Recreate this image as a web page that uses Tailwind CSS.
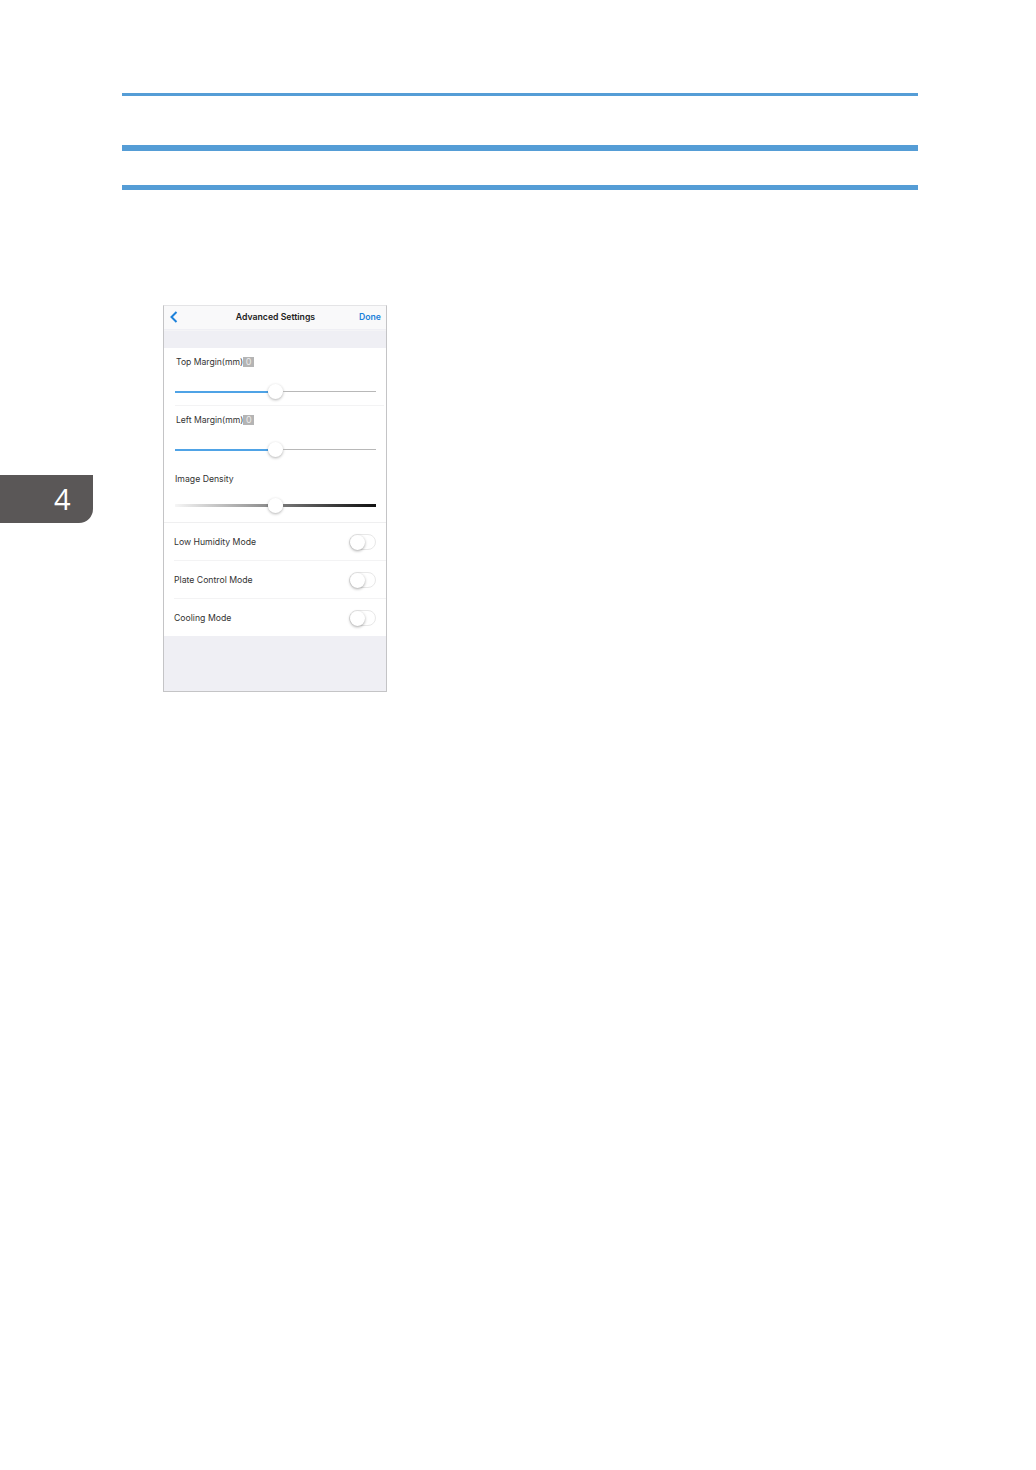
<!DOCTYPE html>
<html lang="en">
<head>
    <meta charset="UTF-8">
    <title>Advanced Settings</title>
    <script src="https://cdn.jsdelivr.net/npm/@tailwindcss/browser@4"></script>
</head>
<body class="bg-white font-['Liberation_Sans',sans-serif]">
    <div class="flex w-[1036px] h-[1470px]">
        <!-- Chapter tab -->
        <div class="w-[122px] shrink-0 pt-[475px]">
            <div class="w-[93px] h-[48px] pl-[54px] pt-[7px] bg-[#5a5757] rounded-br-[14px] text-white text-[29px] leading-[34px] font-['Open_Sans',sans-serif]">4</div>
        </div>

        <div class="w-[796px] pt-[93px]">
            <div class="h-[3px] bg-[#559dd6]"></div>
            <div class="h-[6px] mt-[49px] bg-[#559dd6]"></div>
            <div class="h-[5px] mt-[34px] bg-[#559dd6]"></div>

            <!-- Phone screenshot -->
            <div class="ml-[41px] mt-[115px] w-[224px] h-[387px] border border-[#c4c4c6] border-t-[#e4e4e6] bg-[#efeff4] flex flex-col text-[#333] font-['Inter',sans-serif]">
                <div class="h-[23px] bg-[#f9f9fa] grid grid-cols-[1fr_auto_1fr] items-center pl-[6px] pr-[5px]">
                    <svg class="w-[8px] h-[12px] -mt-[2px]" viewBox="0 0 8 12" fill="none" stroke="#1d82db" stroke-width="2"><path d="M6.5 1 L1.5 6 L6.5 11"/></svg>
                    <span class="text-[8.7px] font-semibold text-[#222]">Advanced Settings</span>
                    <span class="text-[8.7px] font-semibold text-[#1d82db] text-right">Done</span>
                </div>
                <div class="h-[18px] mt-px bg-[#efeff4] border-t border-[#f4f4f6]"></div>

                <div class="bg-white h-[288px] flex flex-col">
                    <!-- Top margin -->
                    <div class="h-[57px] pl-[12px] pt-[8px] flex flex-col">
                        <div class="flex items-center h-[12px] text-[8.6px] leading-[12px]">
                            <span>Top Margin(mm)</span>
                            <span class="w-[11px] h-[10px] bg-[#b4b4b4] text-[#ececec] text-[9px] leading-[10px] text-center">0</span>
                        </div>
                        <div class="flex items-center w-[201px] -ml-[1px] mt-[16px]">
                            <div class="w-[93px] h-[2px] bg-[#4fa3e6]"></div>
                            <div class="w-[15px] h-[15px] rounded-full bg-white shadow-[0_1px_3px_rgba(0,0,0,0.3)] shrink-0"></div>
                            <div class="flex-1 h-px bg-[#b8b8b8]"></div>
                        </div>
                    </div>
                    <div class="h-px ml-[11px] mr-[2px] bg-[#f3f3f4]"></div>
                    <!-- Left margin -->
                    <div class="h-[58px] pl-[12px] pt-[8px] flex flex-col">
                        <div class="flex items-center h-[12px] text-[8.6px] leading-[12px]">
                            <span>Left Margin(mm)</span>
                            <span class="w-[11px] h-[10px] bg-[#b4b4b4] text-[#ececec] text-[9px] leading-[10px] text-center">0</span>
                        </div>
                        <div class="flex items-center w-[201px] -ml-[1px] mt-[16px]">
                            <div class="w-[93px] h-[2px] bg-[#4fa3e6]"></div>
                            <div class="w-[15px] h-[15px] rounded-full bg-white shadow-[0_1px_3px_rgba(0,0,0,0.3)] shrink-0"></div>
                            <div class="flex-1 h-px bg-[#b8b8b8]"></div>
                        </div>
                    </div>
                    <!-- Image density -->
                    <div class="h-[59px] pl-[11px] pt-[9px] flex flex-col border-b border-[#efeff0]">
                        <div class="h-[12px] text-[8.7px] leading-[12px]">Image Density</div>
                        <div class="flex items-center w-[201px] mt-[13px]">
                            <div class="w-[93px] h-[3px] bg-gradient-to-r from-[#f6f6f6] to-[#8c8c8c]"></div>
                            <div class="w-[15px] h-[15px] rounded-full bg-white shadow-[0_1px_3px_rgba(0,0,0,0.3)] shrink-0"></div>
                            <div class="flex-1 h-[3px] bg-gradient-to-r from-[#777] to-[#111]"></div>
                        </div>
                    </div>
                    <!-- Toggles -->
                    <div class="h-[38px] shrink-0 ml-[10px] pr-[10px] flex items-center justify-between text-[8.7px] border-b border-[#f3f3f4]">
                        <span class="mt-[2px]">Low Humidity Mode</span>
                        <div class="w-[27px] h-[16px] rounded-full border border-[#e8e8e8] bg-white">
                            <div class="w-[15px] h-[15px] rounded-full bg-white shadow-[0_1px_3px_rgba(0,0,0,0.35)]"></div>
                        </div>
                    </div>
                    <div class="h-[38px] shrink-0 ml-[10px] pr-[10px] flex items-center justify-between text-[8.7px] border-b border-[#f3f3f4]">
                        <span class="mt-[2px]">Plate Control Mode</span>
                        <div class="w-[27px] h-[16px] rounded-full border border-[#e8e8e8] bg-white">
                            <div class="w-[15px] h-[15px] rounded-full bg-white shadow-[0_1px_3px_rgba(0,0,0,0.35)]"></div>
                        </div>
                    </div>
                    <div class="h-[37px] shrink-0 ml-[10px] pr-[10px] flex items-center justify-between text-[8.7px]">
                        <span class="mt-[2px]">Cooling Mode</span>
                        <div class="w-[27px] h-[16px] rounded-full border border-[#e8e8e8] bg-white">
                            <div class="w-[15px] h-[15px] rounded-full bg-white shadow-[0_1px_3px_rgba(0,0,0,0.35)]"></div>
                        </div>
                    </div>
                </div>
            </div>
        </div>
    </div>
</body>
</html>
